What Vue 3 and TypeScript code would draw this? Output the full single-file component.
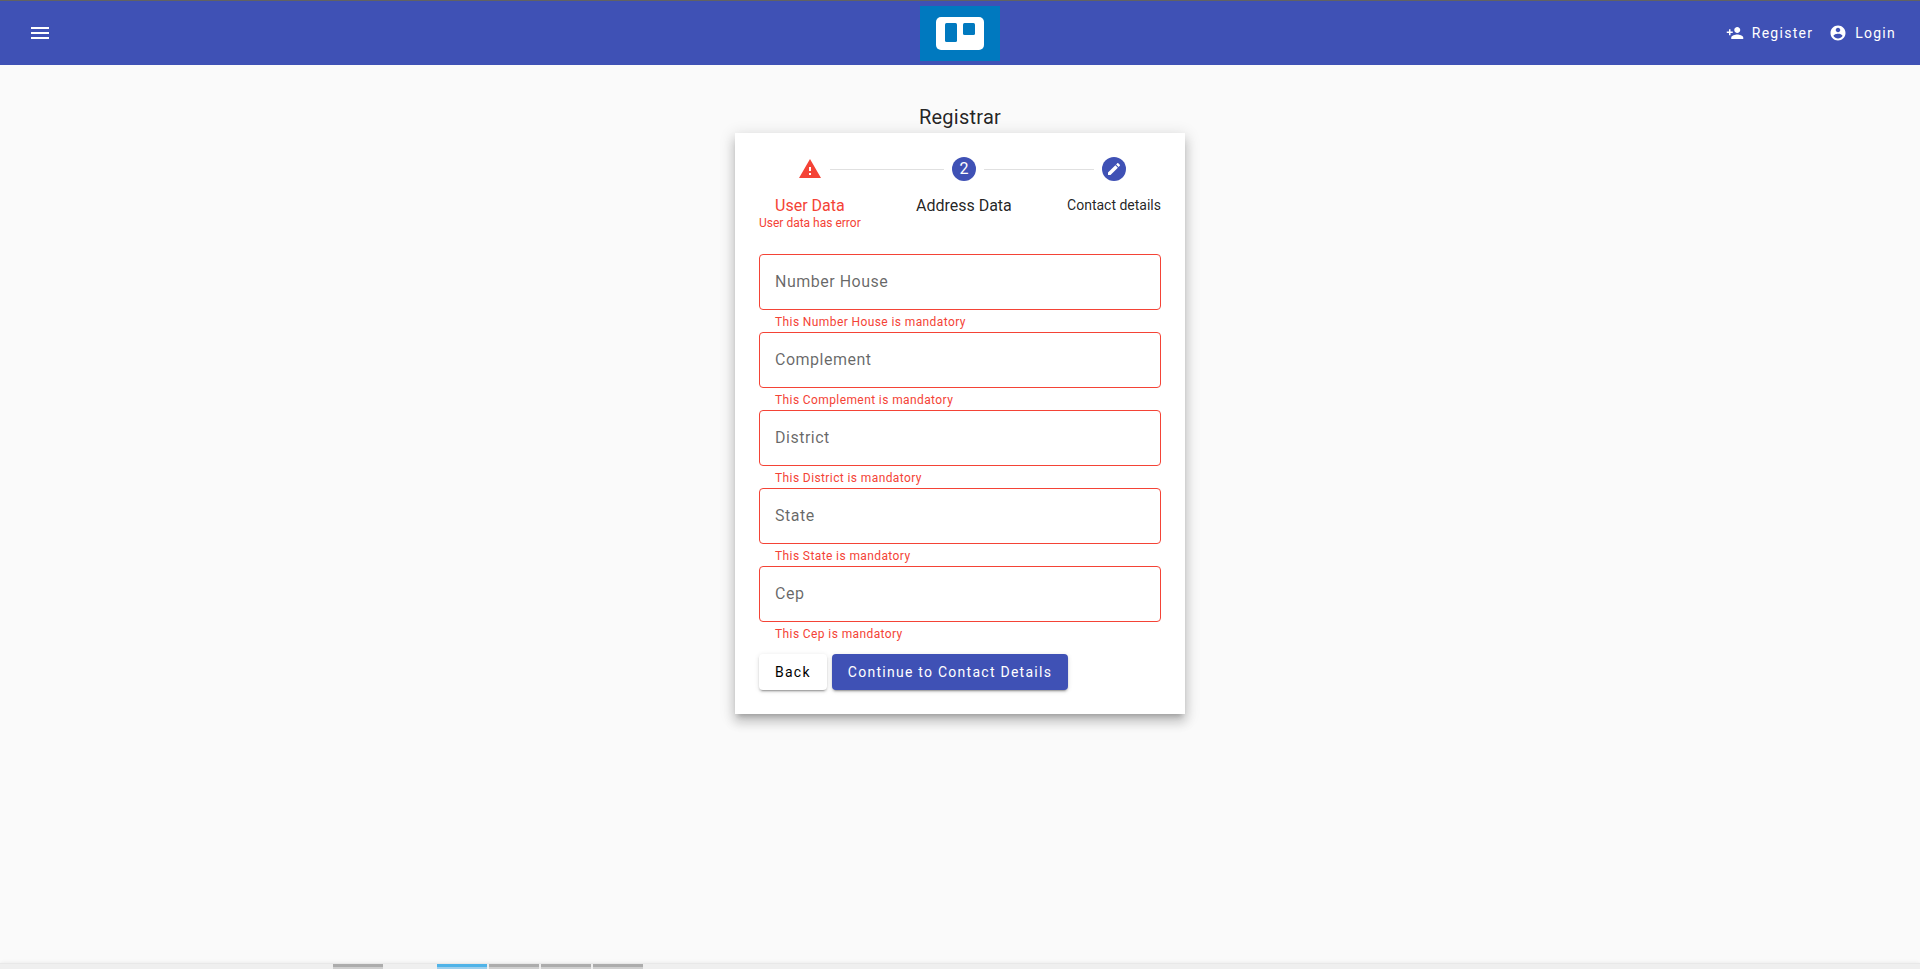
<script setup lang="ts">
import { reactive } from 'vue'

interface Field {
  id: string
  label: string
}

interface DockItem {
  state: 'empty' | 'idle' | 'active'
}

const fields: Field[] = [
  { id: 'numberHouse', label: 'Number House' },
  { id: 'complement', label: 'Complement' },
  { id: 'district', label: 'District' },
  { id: 'state', label: 'State' },
  { id: 'cep', label: 'Cep' },
]

const address = reactive<Record<string, string>>({
  numberHouse: '',
  complement: '',
  district: '',
  state: '',
  cep: '',
})

const dock: DockItem[] = [
  { state: 'idle' },
  { state: 'empty' },
  { state: 'active' },
  { state: 'idle' },
  { state: 'idle' },
  { state: 'idle' },
]
</script>

<template>
  <div class="page">
    <header class="toolbar">
      <div class="toolbar-side">
        <button class="icon-button" type="button" aria-label="Menu">
          <svg width="24" height="24" viewBox="0 0 24 24" fill="currentColor">
            <path d="M3 18h18v-2H3v2zm0-5h18v-2H3v2zm0-7v2h18V6H3z" />
          </svg>
        </button>
      </div>
      <a class="logo" href="#" aria-label="Home">
        <svg width="80" height="55" viewBox="0 0 80 55">
          <rect width="80" height="55" fill="#0079bf" />
          <rect x="16" y="11" width="48" height="33" rx="5" fill="#fff" />
          <rect x="25" y="17" width="12" height="19" rx="1.5" fill="#0079bf" />
          <rect x="43" y="17" width="12" height="12" rx="1.5" fill="#0079bf" />
        </svg>
      </a>
      <nav class="toolbar-side toolbar-end">
        <a class="nav-link" href="#register">
          <svg width="18" height="18" viewBox="0 0 24 24" fill="currentColor">
            <path d="M15 12c2.21 0 4-1.79 4-4s-1.79-4-4-4-4 1.79-4 4 1.79 4 4 4zm-9-2V7H4v3H1v2h3v3h2v-3h3v-2H6zm9 4c-2.67 0-8 1.34-8 4v2h16v-2c0-2.66-5.33-4-8-4z" />
          </svg>
          <span>Register</span>
        </a>
        <a class="nav-link" href="#login">
          <svg width="18" height="18" viewBox="0 0 24 24" fill="currentColor">
            <path d="M12 2C6.48 2 2 6.48 2 12s4.480 10 10 10 10-4.480 10-10S17.520 2 12 2zm0 3c1.660 0 3 1.340 3 3s-1.340 3-3 3-3-1.340-3-3 1.340-3 3-3zm0 14.200c-2.500 0-4.710-1.280-6-3.220.03-1.990 4-3.080 6-3.080 1.990 0 5.970 1.090 6 3.080-1.290 1.940-3.500 3.220-6 3.220z" />
          </svg>
          <span>Login</span>
        </a>
      </nav>
    </header>

    <main class="content">
      <h1 class="title">Registrar</h1>
      <section class="card">
        <ol class="stepper">
          <li class="step error">
            <div class="marker">
              <svg width="24" height="24" viewBox="0 0 24 24" fill="currentColor">
                <path d="M1 21h22L12 2 1 21zm12-3h-2v-2h2v2zm0-4h-2v-4h2v4z" />
              </svg>
            </div>
            <span class="step-label large">User Data</span>
            <span class="step-error">User data has error</span>
          </li>
          <li class="connector" aria-hidden="true"></li>
          <li class="step" aria-current="step">
            <div class="marker"><span class="badge">2</span></div>
            <span class="step-label large">Address Data</span>
          </li>
          <li class="connector" aria-hidden="true"></li>
          <li class="step">
            <div class="marker">
              <span class="badge">
                <svg width="16" height="16" viewBox="0 0 24 24" fill="currentColor">
                  <path d="M3 17.250V21h3.750L17.810 9.940l-3.750-3.750L3 17.250zM20.710 7.040c.39-.39.39-1.020 0-1.410l-2.340-2.340c-.39-.39-1.020-.39-1.410 0l-1.830 1.830 3.750 3.750 1.830-1.830z" />
                </svg>
              </span>
            </div>
            <span class="step-label">Contact details</span>
          </li>
        </ol>

        <form @submit.prevent>
          <div v-for="field in fields" :key="field.id" class="field">
            <div class="control">
              <input
                :id="field.id"
                v-model="address[field.id]"
                type="text"
                required
                aria-invalid="true"
                :aria-describedby="field.id + '-error'"
              />
              <label v-show="!address[field.id]" :for="field.id">{{ field.label }}</label>
            </div>
            <p :id="field.id + '-error'" class="message">This {{ field.label }} is mandatory</p>
          </div>
          <div class="actions">
            <button class="button" type="button">Back</button>
            <button class="button primary" type="submit">Continue to Contact Details</button>
          </div>
        </form>
      </section>
    </main>

    <footer class="dock" aria-hidden="true">
      <span v-for="(item, index) in dock" :key="index" class="dock-item" :class="item.state"></span>
    </footer>
  </div>
</template>

<style>
body {
  margin: 0;
  background: #fafafa;
}
</style>

<style scoped>
.page {
  box-sizing: border-box;
  min-height: 100vh;
  display: flex;
  flex-direction: column;
  overflow: hidden;
  font-family: Roboto, "Liberation Sans", sans-serif;
  font-size: 14px;
  line-height: 20px;
  color: rgba(0, 0, 0, 0.87);
  background: #fafafa;
}

.toolbar {
  display: flex;
  align-items: center;
  height: 64px;
  padding: 0 16px;
  border-top: 1px solid #626262;
  background: #3f51b5;
  color: #fff;
}

.toolbar-side {
  flex: 1;
  display: flex;
  align-items: center;
}

.toolbar-end {
  justify-content: flex-end;
}

.icon-button {
  display: flex;
  padding: 12px;
  border: 0;
  background: none;
  color: inherit;
}

.logo svg {
  display: block;
}

.nav-link {
  display: flex;
  align-items: center;
  gap: 8px;
  padding: 0 8px;
  color: inherit;
  text-decoration: none;
  letter-spacing: 0.09em;
}

.content {
  flex: 1;
  display: flex;
  flex-direction: column;
  align-items: center;
  padding: 36px 16px 16px;
}

.title {
  margin: 0;
  font-size: 20px;
  line-height: 32px;
  font-weight: 400;
  letter-spacing: 0.0125em;
}

.card {
  box-sizing: border-box;
  width: 100%;
  max-width: 450px;
  padding: 24px;
  background: #fff;
  box-shadow:
    0 5px 5px -3px rgba(0, 0, 0, 0.2),
    0 8px 10px 1px rgba(0, 0, 0, 0.14),
    0 3px 14px 2px rgba(0, 0, 0, 0.12);
}

.stepper {
  display: flex;
  margin: 0 0 24px;
  padding: 0;
  list-style: none;
}

.step {
  display: flex;
  flex-direction: column;
  align-items: center;
  white-space: nowrap;
}

.marker {
  align-self: stretch;
  display: flex;
  align-items: center;
  gap: 8px;
  margin-bottom: 15px;
}

.marker::before,
.marker::after {
  content: "";
  flex: 1;
  height: 1px;
  background: #e0e0e0;
}

.step:first-child .marker::before,
.step:last-child .marker::after {
  background: none;
}

.connector {
  flex: 1;
  height: 1px;
  margin-top: 12px;
  background: #e0e0e0;
}

.badge {
  display: flex;
  align-items: center;
  justify-content: center;
  width: 24px;
  height: 24px;
  border-radius: 50%;
  background: #3f51b5;
  color: #fff;
  font-size: 16px;
}

.step-label {
  line-height: 18px;
}

.large {
  font-size: 16px;
  line-height: 20px;
}

.error {
  color: #f44336;
}

.step-error {
  font-size: 12px;
  line-height: 14px;
}

.field {
  display: flex;
  flex-direction: column;
}

.control {
  display: grid;
}

.control input,
.control label {
  grid-area: 1 / 1;
  font-size: 16px;
  letter-spacing: 0.03125em;
}

.control input {
  box-sizing: border-box;
  width: 100%;
  height: 56px;
  padding: 0 16px;
  border: 1px solid #f44336;
  border-radius: 4px;
  background: none;
  font-family: inherit;
  color: inherit;
  outline: none;
}

.control label {
  align-self: center;
  justify-self: start;
  margin-left: 16px;
  color: rgba(0, 0, 0, 0.6);
  pointer-events: none;
}

.message {
  margin: 0;
  padding: 2px 16px 0;
  font-size: 12px;
  line-height: 20px;
  letter-spacing: 0.0333em;
  color: #f44336;
}

.actions {
  display: flex;
  gap: 5px;
  margin-top: 10px;
}

.button {
  height: 36px;
  padding: 0 16px;
  border: 0;
  border-radius: 4px;
  background: #fff;
  color: #000;
  font-family: inherit;
  font-size: 14px;
  letter-spacing: 0.09em;
  box-shadow:
    0 3px 1px -2px rgba(0, 0, 0, 0.2),
    0 2px 2px 0 rgba(0, 0, 0, 0.14),
    0 1px 5px 0 rgba(0, 0, 0, 0.12);
}

.primary {
  background: #3f51b5;
  color: #fff;
}

.dock {
  display: flex;
  gap: 2px;
  padding-left: 333px;
  border-top: 1px solid #e8e8e8;
  background: #efefef;
  box-shadow: 0 0 4px rgba(0, 0, 0, 0.08);
}

.dock-item {
  box-sizing: border-box;
  width: 50px;
  height: 5px;
}

.idle {
  background: #acacac;
  border-bottom: 2px solid #cfcfcf;
}

.active {
  background: #4fb3e8;
  border-bottom: 2px solid #9fcfec;
}
</style>
